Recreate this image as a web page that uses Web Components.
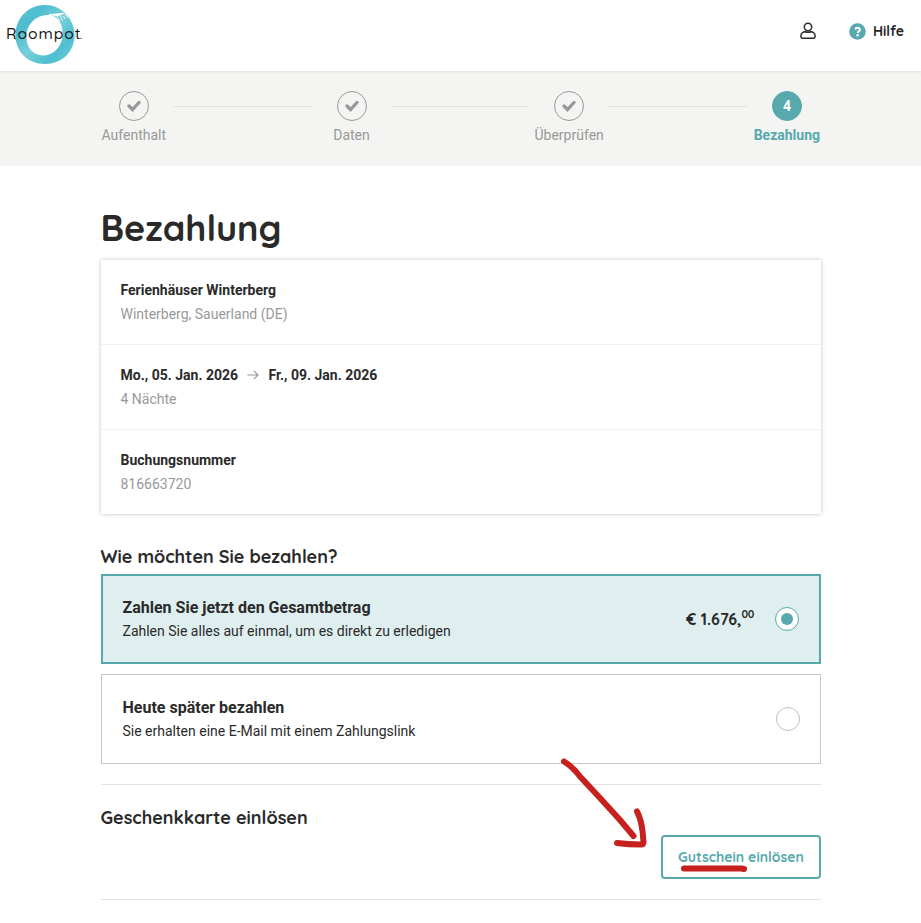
<!DOCTYPE html>
<html lang="de">
<head>
<meta charset="utf-8">
<title>Bezahlung</title>
<style>
  body {
    margin: 0;
    background: #fff;
    color: #2a2a2a;
    font: 14px/24px Roboto, "Liberation Sans", sans-serif;
    --teal: #57a9ad;
    --grey: #999;
    --display: Quicksand, Lato, sans-serif;
  }
</style>
</head>
<body>
<booking-page></booking-page>

<script>
  class SiteHeader extends HTMLElement {
    connectedCallback() {
      this.attachShadow({ mode: 'open' }).innerHTML = `
        <style>
          :host {
            display: flex;
            justify-content: space-between;
            box-sizing: border-box;
            height: 71px;
            padding: 0 17px 0 0;
            background: #fff;
            box-shadow: 0 0 3px rgba(0, 0, 0, .15);
            position: relative;
          }
          .logo { display: block; }
          .logo text { font-family: Quicksand, Lato, sans-serif; font-weight: 500; fill: #151515; }
          nav { display: flex; align-items: center; height: 62px; }
          .user { margin-right: 33px; }
          .help { margin-right: 7px; }
          svg { display: block; }
          b { font: 700 14px/20px var(--display); }
        </style>
        <svg class="logo" width="100" height="70" viewBox="0 0 100 70">
          <defs>
            <linearGradient id="ring" x1="0" y1="0" x2="1" y2="1">
              <stop offset="0" stop-color="#62c6d4"/>
              <stop offset=".25" stop-color="#4dbdd0"/>
              <stop offset=".5" stop-color="#78cfda"/>
              <stop offset=".75" stop-color="#4fbfd0"/>
              <stop offset="1" stop-color="#70ced9"/>
            </linearGradient>
          </defs>
          <path fill="url(#ring)" fill-rule="evenodd" d="M45 5C61 5 74.500 18 74.500 35S62 64 45 64 15.500 52 15.500 35 28 5 45 5ZM50 15C37 14 27 23 26.500 36 26 47 33 55.500 43 55.500 54 55.500 62 46 62.500 35 63 26 60 17 50 15Z"/>
          <path d="M49 14.600 64 13.300 57 16Z" fill="#fff" stroke="#fff" stroke-width=".8"/>
          <path d="m57 16 3 5m0-6 2.500 6m1-5 1.500 3m0-5 3 4" stroke="#fff" stroke-width=".8"/>
          <path d="M73.500 43q3-7 1.500-14" fill="none" stroke="#b5e3e9" stroke-width=".8"/>
          <text transform="translate(6 38.500) scale(1.080 1)" font-size="14.500" textLength="69">Roompot</text>
          <text x="79.800" y="38.500" font-size="11">.</text>
        </svg>
        <nav>
          <svg class="user" width="16" height="18" viewBox="0 0 16 18" fill="none" stroke="#2a2a2a" stroke-width="1.500">
            <circle cx="8" cy="5" r="3.700"/>
            <path d="M5.200 9.700C2.700 9.700.9 11.600.9 14v.8q0 1.400 1.400 1.400h11.400q1.400 0 1.400-1.400V14c0-2.400-1.800-4.300-4.300-4.300Q8 10.700 5.200 9.700Z"/>
          </svg>
          <svg class="help" width="17" height="17" viewBox="0 0 17 17">
            <circle cx="8.500" cy="8.500" r="8.300" fill="#57a9ad"/>
            <path d="M6.200 6.500Q6.500 4.800 8.500 4.800c1.500 0 2.400.8 2.400 2 0 1.700-2.200 1.500-2.200 3.200" fill="none" stroke="#fff" stroke-width="1.900"/>
            <circle cx="8.600" cy="12.300" r="1.200" fill="#fff"/>
          </svg>
          <b>Hilfe</b>
        </nav>
      `;
    }
  }
  customElements.define('site-header', SiteHeader);

  class ProgressSteps extends HTMLElement {
    connectedCallback() {
      this.attachShadow({ mode: 'open' }).innerHTML = `
        <style>
          :host { display: block; height: 95px; background: #f4f4f2; }
          .track { display: flex; width: 733px; padding-left: 94px; }
          ::slotted(hr) {
            flex: 1;
            margin: 35px 0 0;
            height: 1px;
            border: 0;
            background: #e1e1df;
          }
        </style>
        <div class="track"><slot></slot></div>
      `;
    }
  }
  customElements.define('progress-steps', ProgressSteps);

  class ProgressStep extends HTMLElement {
    connectedCallback() {
      const current = this.getAttribute('current');
      const mark = current || `
        <svg width="14" height="12" viewBox="0 0 14 12">
          <path d="m2 6 3.500 3.500L12 2.500" fill="none" stroke="#999" stroke-width="3.300" stroke-linecap="round"/>
        </svg>`;
      this.attachShadow({ mode: 'open' }).innerHTML = `
        <style>
          :host {
            display: flex;
            flex-direction: column;
            align-items: center;
            width: 80px;
            padding-top: 20px;
            color: var(--grey);
          }
          :host([current]) { color: var(--teal); font-weight: 700; }
          .mark {
            display: flex;
            align-items: center;
            justify-content: center;
            box-sizing: border-box;
            width: 30px;
            height: 30px;
            border: 1px solid #999;
            border-radius: 50%;
          }
          :host([current]) .mark {
            background: var(--teal);
            border-color: var(--teal);
            color: #fff;
          }
          .label { line-height: 20px; margin: 4px 0 0 -.4px; white-space: nowrap; }
        </style>
        <div class="mark">${mark}</div>
        <div class="label"><slot></slot></div>
      `;
    }
  }
  customElements.define('progress-step', ProgressStep);

  class SummaryCard extends HTMLElement {
    connectedCallback() {
      this.attachShadow({ mode: 'open' }).innerHTML = `
        <style>
          :host {
            display: block;
            background: #fff;
            box-shadow: 0 0 4px rgba(0, 0, 0, .25);
          }
        </style>
        <slot></slot>
      `;
    }
  }
  customElements.define('summary-card', SummaryCard);

  class SummaryRow extends HTMLElement {
    connectedCallback() {
      this.attachShadow({ mode: 'open' }).innerHTML = `
        <style>
          :host {
            display: block;
            box-sizing: border-box;
            height: 85px;
            padding: 18px 19.500px 0;
            border-bottom: 1px solid #f0f0f0;
          }
          :host(:last-child) { height: 84px; border-bottom: 0; }
          .title { display: flex; align-items: center; font-weight: 700; }
          .info { color: var(--grey); }
        </style>
        <div class="title"><slot name="title"></slot></div>
        <div class="info"><slot></slot></div>
      `;
    }
  }
  customElements.define('summary-row', SummaryRow);

  class DateRange extends HTMLElement {
    connectedCallback() {
      this.attachShadow({ mode: 'open' }).innerHTML = `
        <style>
          :host { display: flex; align-items: center; }
          svg { margin: 0 9.300px 0 9px; }
        </style>
        <slot name="from"></slot>
        <svg width="12" height="12" viewBox="0 0 12 12" fill="none" stroke="#999" stroke-width="1.200">
          <path d="M.5 6H11M6.800 1.800 11 6l-4.200 4.200"/>
        </svg>
        <slot name="to"></slot>
      `;
    }
  }
  customElements.define('date-range', DateRange);

  class PaymentOption extends HTMLElement {
    connectedCallback() {
      this.attachShadow({ mode: 'open' }).innerHTML = `
        <style>
          :host {
            display: flex;
            align-items: center;
            box-sizing: border-box;
            height: 90px;
            padding: 0 20px 0 20.500px;
            border: 1px solid #c6c6c6;
            margin-bottom: 10px;
          }
          :host([selected]) {
            padding: 0 20px 0 19.500px;
            border: 2px solid var(--teal);
            background: #dfefef;
          }
          .text { flex: 1; }
          .title { font-size: 16px; font-weight: 700; line-height: 22px; padding-top: 2px; }
          .price { font: 700 16px/24px var(--display); margin-right: 21px; }
          .radio {
            display: flex;
            align-items: center;
            justify-content: center;
            box-sizing: border-box;
            width: 24px;
            height: 24px;
            border: 1px solid #bcbcbc;
            border-radius: 50%;
            background: #fff;
          }
          :host([selected]) .radio { border-color: var(--teal); }
          :host([selected]) .radio::after {
            content: "";
            width: 12px;
            height: 12px;
            border-radius: 50%;
            background: var(--teal);
          }
        </style>
        <div class="text">
          <div class="title"><slot name="title"></slot></div>
          <div><slot></slot></div>
        </div>
        <div class="price"><slot name="price"></slot></div>
        <div class="radio"></div>
      `;
    }
  }
  customElements.define('payment-option', PaymentOption);

  class OutlineButton extends HTMLElement {
    connectedCallback() {
      this.attachShadow({ mode: 'open' }).innerHTML = `
        <style>
          :host { display: block; }
          button {
            display: block;
            box-sizing: border-box;
            width: 160px;
            height: 44px;
            padding: 0;
            border: 2px solid var(--teal);
            border-radius: 4px;
            background: #fff;
            color: var(--teal);
            font: 700 14px/20px var(--display);
            white-space: nowrap;
          }
        </style>
        <button><slot></slot></button>
      `;
    }
  }
  customElements.define('outline-button', OutlineButton);

  // Red hand-drawn arrow and underline pointing at the voucher button
  class PenMarks extends HTMLElement {
    connectedCallback() {
      this.attachShadow({ mode: 'open' }).innerHTML = `
        <style>
          :host { position: absolute; left: 550px; top: 750px; pointer-events: none; }
          svg { display: block; }
        </style>
        <svg width="210" height="135" viewBox="550 750 210 135" fill="none" stroke="#c7211f" stroke-width="6" stroke-linecap="round" stroke-linejoin="round">
          <path d="M564 761.500Q573 767 580 776.500L600 798 620 820 633.500 836"/>
          <path d="M637 811.500Q641 819 642.500 831L643.500 842Q643.500 844.500 641 844.500Q628 844.500 617 843"/>
          <path d="M684 868.500H742L744 869"/>
        </svg>
      `;
    }
  }
  customElements.define('pen-marks', PenMarks);

  class BookingPage extends HTMLElement {
    connectedCallback() {
      this.attachShadow({ mode: 'open' }).innerHTML = `
        <style>
          :host { display: block; position: relative; height: 923px; overflow: hidden; }
          main { width: 720px; margin-left: 101px; }
          h1, h2 { margin: 0; font-family: var(--display); font-weight: 700; }
          h1 { padding-top: 38px; font-size: 36px; line-height: 48px; height: 56px; margin-left: -.5px; }
          h2 { font-size: 18px; line-height: 24px; margin-left: -.5px; }
          .pay { margin-top: 31px; padding-bottom: 5px; }
          sup { font-size: 10.700px; line-height: 0; vertical-align: 7px; letter-spacing: -.3px; }
          .gift {
            margin-top: 20px;
            padding-top: 21px;
            height: 93px;
            border: solid #e3e3e3;
            border-width: 1px 0;
          }
          .action { display: flex; justify-content: flex-end; margin-top: 5px; }
        </style>
        <site-header></site-header>
        <progress-steps>
          <progress-step>Aufenthalt</progress-step>
          <hr>
          <progress-step>Daten</progress-step>
          <hr>
          <progress-step>Überprüfen</progress-step>
          <hr>
          <progress-step current="4">Bezahlung</progress-step>
        </progress-steps>
        <main>
          <h1>Bezahlung</h1>
          <summary-card>
            <summary-row>
              <span slot="title">Ferienhäuser Winterberg</span>
              Winterberg, Sauerland (DE)
            </summary-row>
            <summary-row>
              <date-range slot="title">
                <span slot="from">Mo., 05. Jan. 2026</span>
                <span slot="to">Fr., 09. Jan. 2026</span>
              </date-range>
              4 Nächte
            </summary-row>
            <summary-row>
              <span slot="title">Buchungsnummer</span>
              816663720
            </summary-row>
          </summary-card>
          <h2 class="pay">Wie möchten Sie bezahlen?</h2>
          <payment-option selected>
            <span slot="title">Zahlen Sie jetzt den Gesamtbetrag</span>
            Zahlen Sie alles auf einmal, um es direkt zu erledigen
            <span slot="price">€ 1.676,<sup>00</sup></span>
          </payment-option>
          <payment-option>
            <span slot="title">Heute später bezahlen</span>
            Sie erhalten eine E-Mail mit einem Zahlungslink
          </payment-option>
          <section class="gift">
            <h2>Geschenkkarte einlösen</h2>
            <div class="action"><outline-button>Gutschein einlösen</outline-button></div>
          </section>
        </main>
        <pen-marks></pen-marks>
      `;
    }
  }
  customElements.define('booking-page', BookingPage);
</script>
</body>
</html>
